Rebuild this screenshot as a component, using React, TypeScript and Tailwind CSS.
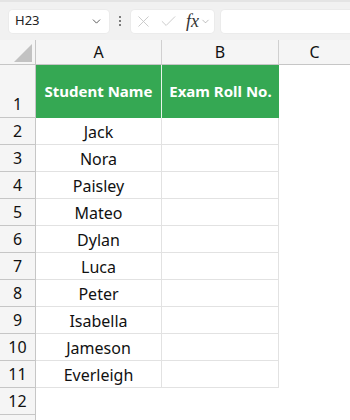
import { ChevronDown, X, Check } from 'lucide-react';

const NAMES = ['Jack', 'Nora', 'Paisley', 'Mateo', 'Dylan', 'Luca', 'Peter', 'Isabella', 'Jameson', 'Everleigh'];

const font = { fontFamily: '"Noto Sans", "Open Sans", sans-serif' };

function TopBar(): JSX.Element {
  return (
    <div className="h-[40px] bg-[#f1f1f1] border-t-2 border-[#e4e4e4] flex items-center pl-[9px] gap-0">
      <div className="w-[100px] h-[23px] bg-white rounded-[4px] flex items-center justify-between px-[6px] shadow-[0_0_0_1px_#ebebeb]">
        <span className="text-[13px] text-[#222]">H23</span>
        <ChevronDown size={13} strokeWidth={1.6} className="text-[#444]" />
      </div>
      <div className="w-[22px] flex flex-col items-center gap-[2px]">
        <span className="w-[2px] h-[2px] bg-[#555] rounded-full" />
        <span className="w-[2px] h-[2px] bg-[#555] rounded-full" />
        <span className="w-[2px] h-[2px] bg-[#555] rounded-full" />
      </div>
      <div className="w-[83px] h-[23px] bg-white rounded-[4px] flex items-center pl-[3px] shadow-[0_0_0_1px_#ebebeb]">
        <X size={19} strokeWidth={1.1} className="text-[#c4c4c4]" />
        <Check size={19} strokeWidth={1.1} className="text-[#c4c4c4] ml-[6px]" />
        <span className="ml-[8px] text-[18px] leading-none italic text-[#333]" style={{ fontFamily: '"Liberation Serif", serif' }}>fx</span>
        <ChevronDown size={11} strokeWidth={1.4} className="text-[#999] ml-[1px]" />
      </div>
      <div className="ml-[7px] flex-1 h-[23px] bg-white rounded-l-[4px] shadow-[0_0_0_1px_#ebebeb]" />
    </div>
  );
}

export default function App(): JSX.Element {
  return (
    <div className="w-[350px] h-[420px] overflow-hidden bg-white text-[#111]" style={font}>
      <TopBar />
      {/* column headers */}
      <div className="flex h-[25px] bg-[#f5f5f5] border-b border-[#c6c6c6]">
        <div className="w-[36px] relative border-r border-[#c6c6c6]">
          <div className="absolute right-[3px] bottom-[2px] w-0 h-0 border-l-[18px] border-l-transparent border-b-[18px] border-b-[#c2c2c2]" />
        </div>
        <div className="w-[126px] border-r border-[#d0d0d0] flex items-center justify-center text-[16px]">A</div>
        <div className="w-[117px] border-r border-[#d0d0d0] flex items-center justify-center text-[16px]">B</div>
        <div className="flex-1 flex items-center justify-center text-[16px]">C</div>
      </div>
      {/* row 1 */}
      <div className="flex h-[53px]">
        <div className="w-[36px] bg-[#f5f5f5] border-r border-b border-[#c6c6c6] flex items-end justify-center pb-[1px] text-[16px]">1</div>
        <div className="w-[126px] bg-[#35a853] border-r border-[#e9f5ec] flex items-center justify-center text-white font-bold text-[15px]">Student Name</div>
        <div className="w-[117px] bg-[#35a853] flex items-center justify-center text-white font-bold text-[15px]">Exam Roll No.</div>
        <div className="flex-1" />
      </div>
      {NAMES.map((name, i) => (
        <div key={name} className="flex h-[27px]">
          <div className="w-[36px] bg-[#f5f5f5] border-r border-b border-[#c6c6c6] flex items-center justify-center text-[16px]">{i + 2}</div>
          <div className="w-[126px] border-r border-b border-[#e2e2e2] flex items-center justify-center text-[16px] pt-[1px]">{name}</div>
          <div className="w-[117px] border-r border-b border-[#e2e2e2]" />
          <div className="flex-1" />
        </div>
      ))}
      <div className="flex h-[27px]">
        <div className="w-[36px] bg-[#f5f5f5] border-r border-b border-[#c6c6c6] flex items-center justify-center text-[16px]">12</div>
      </div>
      <div className="flex h-[27px]">
        <div className="w-[36px] bg-[#f5f5f5] border-r border-[#c6c6c6]" />
      </div>
    </div>
  );
}
